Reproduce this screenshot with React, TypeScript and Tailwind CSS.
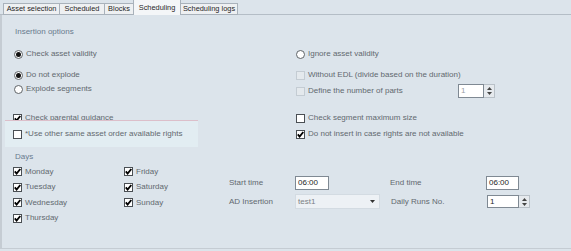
import React from "react";

function Radio({ checked }: { checked?: boolean }) {
  return (
    <span className="w-[9px] h-[9px] flex-none rounded-full border border-[#5f6468] bg-white flex items-center justify-center">
      {checked && <span className="w-[5px] h-[5px] rounded-full bg-[#111]" />}
    </span>
  );
}

function Check({ checked, disabled }: { checked?: boolean; disabled?: boolean }) {
  return (
    <span
      className={
        disabled
          ? "w-[9px] h-[9px] flex-none border border-[#c4ccd3] bg-[#e4e9ed] flex items-center justify-center"
          : "w-[9px] h-[9px] flex-none border border-[#4a4f54] bg-white flex items-center justify-center"
      }
    >
      {checked && (
        <svg width="7" height="7" viewBox="0 0 7 7">
          <path d="M0.8 3.4 L2.6 5.6 L6.3 1.0" stroke="#000" strokeWidth="1.8" fill="none" />
        </svg>
      )}
    </span>
  );
}

function Spin({ w, h, value, dim }: { w: string; h: string; value: string; dim?: boolean }) {
  return (
    <div className={`flex ${h}`}>
      <div
        className={`${w} h-full bg-white border border-[#7f8993] flex items-center pl-[2px] ${
          dim ? "text-[#9aa0a6]" : "text-[#1e1e1e]"
        }`}
      >
        {value}
      </div>
      <div className="w-[11px] h-full bg-[#e6eaee] border border-l-0 border-[#b9c1c8] flex flex-col items-center justify-center gap-[2px]">
        <svg width="5" height="3" viewBox="0 0 5 3">
          <path d="M0 3 L2.5 0 L5 3 Z" fill="#444" />
        </svg>
        <svg width="5" height="3" viewBox="0 0 5 3">
          <path d="M0 0 L2.5 3 L5 0 Z" fill="#444" />
        </svg>
      </div>
    </div>
  );
}

export default function App() {
  return (
    <div className="w-[571px] h-[251px] bg-[#dce4eb] flex flex-col overflow-hidden font-['Liberation_Sans',Arial,sans-serif] text-[8px] leading-none text-[#62696f]">
      {/* tab strip */}
      <div className="h-[15px] flex-none flex items-end pl-[3px] border-b border-[#b4bdc6]">
        <div className="-mb-px w-[57px] h-[12px] border border-[#a9b2bb] bg-[#eef0f2] flex items-center justify-center text-[7.4px] text-[#1f1f1f]">
          Asset selection
        </div>
        <div className="-mb-px -ml-px w-[46px] h-[12px] border border-[#a9b2bb] bg-[#eef0f2] flex items-center justify-center text-[7.4px] text-[#1f1f1f]">
          Scheduled
        </div>
        <div className="-mb-px -ml-px w-[30px] h-[12px] border border-[#a9b2bb] bg-[#eef0f2] flex items-center justify-center text-[7.4px] text-[#1f1f1f]">
          Blocks
        </div>
        <div className="-mb-px -ml-px w-[48px] h-[16px] relative z-10 border border-b-0 border-[#a9b2bb] bg-[#f4f6f8] flex items-start pt-[4px] justify-center text-[7.4px] text-[#1f1f1f]">
          Scheduling
        </div>
        <div className="-mb-px -ml-px w-[58px] h-[12px] border border-[#a9b2bb] bg-[#eef0f2] flex items-center justify-center text-[7.4px] text-[#1f1f1f]">
          Scheduling logs
        </div>
      </div>

      {/* panel body */}
      <div className="h-[234px] flex-none border-l-2 border-b border-[#c5ccd3] flex flex-col">
        {/* top two columns */}
        <div className="flex">
          {/* left column */}
          <div className="w-[283px] flex-none pl-[11px] flex flex-col">
            <div className="mt-[10px] h-[14px] flex items-center pl-[2px] text-[#687a8e]">Insertion options</div>
            <div className="mt-[8px] h-[14px] flex items-center gap-[3px] ml-[1px]">
              <Radio checked />
              <span>Check asset validity</span>
            </div>
            <div className="mt-[7px] h-[14px] flex items-center gap-[3px] ml-[1px]">
              <Radio checked />
              <span>Do not explode</span>
            </div>
            <div className="h-[14.5px] flex items-center gap-[3px] ml-[1px]">
              <Radio />
              <span>Explode segments</span>
            </div>
            <div className="mt-[14.5px] h-[14px] flex items-center gap-[3px]">
              <Check checked />
              <span>Check parental guidance</span>
            </div>
            <div className="-mt-[5px] -ml-[8px] w-[193px] h-[27px] relative z-10 bg-[#e2edf2] border-t border-[#dcbfca] flex items-center gap-[3px] pl-[8px]">
              <Check />
              <span>*Use other same asset order available rights</span>
            </div>
          </div>

          {/* right column */}
          <div className="flex-1 pl-[11px] flex flex-col">
            <div className="mt-[32px] h-[14px] flex items-center gap-[3px]">
              <Radio />
              <span>Ignore asset validity</span>
            </div>
            <div className="mt-[7px] h-[14px] flex items-center gap-[3px]">
              <Check disabled />
              <span>Without EDL (divide based on the duration)</span>
            </div>
            <div className="mt-[1px] h-[16px] flex items-center gap-[3px]">
              <Check disabled />
              <span className="w-[147px] flex-none">Define the number of parts</span>
              <Spin w="w-[26px]" h="h-[14px]" value="1" dim />
            </div>
            <div className="mt-[12px] h-[14px] flex items-center gap-[3px]">
              <Check />
              <span>Check segment maximum size</span>
            </div>
            <div className="mt-[2px] h-[14px] flex items-center gap-[3px]">
              <Check checked />
              <span>Do not insert in case rights are not available</span>
            </div>
          </div>
        </div>

        {/* bottom section */}
        <div className="flex">
          <div className="w-[227px] flex-none pl-[11px] flex flex-col">
            <div className="mt-[3px] h-[14px] flex items-center pl-[2px] text-[#687a8e]">Days</div>
            <div className="grid grid-cols-[111px_auto] grid-flow-col grid-rows-[15.5px_15.5px_15.5px_15.5px]">
              {["Monday", "Tuesday", "Wednesday", "Thursday"].map((d) => (
                <div key={d} className="flex items-center gap-[3px]">
                  <Check checked />
                  <span>{d}</span>
                </div>
              ))}
              {["Friday", "Saturday", "Sunday"].map((d) => (
                <div key={d} className="flex items-center gap-[3px]">
                  <Check checked />
                  <span>{d}</span>
                </div>
              ))}
            </div>
          </div>

          <div className="pt-[29px] grid grid-cols-[66px_95px_96px_auto] grid-rows-[14px_15px] gap-y-[4px] items-center">
            <span>Start time</span>
            <div className="w-[34px] h-[14px] bg-white border border-[#7f8993] flex items-center pl-[2px] text-[#1e1e1e]">
              06:00
            </div>
            <span>End time</span>
            <div className="w-[33px] h-[14px] bg-white border border-[#7f8993] flex items-center pl-[2px] text-[#1e1e1e]">
              06:00
            </div>

            <span>AD Insertion</span>
            <div className="w-[85px] h-[15px] bg-[#edf1f5] border border-[#d3dbe2] flex items-center justify-between pl-[2px] pr-[4px] text-[#7b7f84]">
              <span>test1</span>
              <svg width="5" height="3" viewBox="0 0 5 3">
                <path d="M0 0 L2.5 3 L5 0 Z" fill="#333" />
              </svg>
            </div>
            <span className="pl-[1px]">Daily Runs No.</span>
            <div className="pl-[1px]">
              <Spin w="w-[32px]" h="h-[13px]" value="1" />
            </div>
          </div>
        </div>
      </div>
    </div>
  );
}
